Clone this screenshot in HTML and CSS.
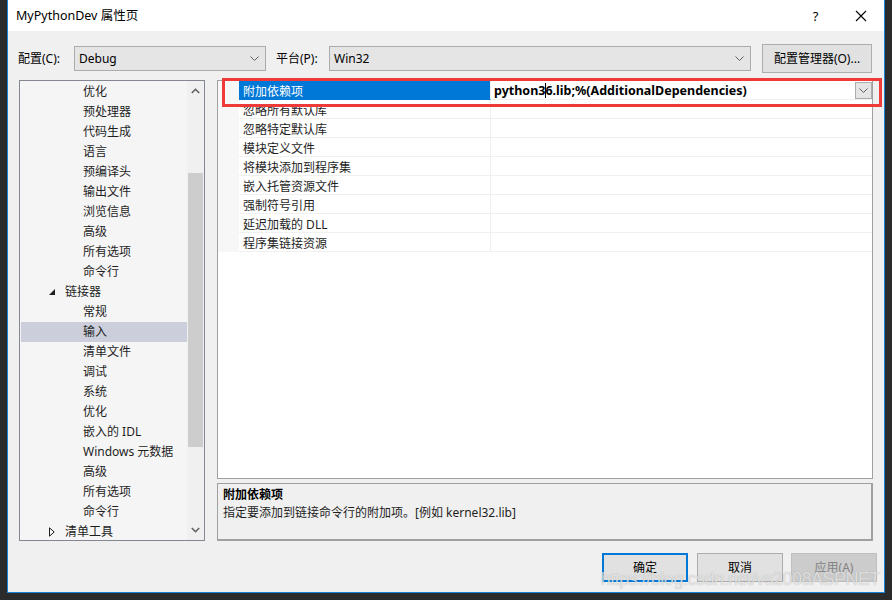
FILE: index.html
```html
<!DOCTYPE html>
<html lang="zh-CN">
<head>
<meta charset="utf-8">
<title>MyPythonDev 属性页</title>
<link rel="stylesheet" href="styles.css">
</head>
<body>
<div class="window">
  <div class="titlebar">
    <span class="title">MyPythonDev 属性页</span>
    <span class="tb-help">?</span>
    <span class="tb-close"><svg width="12" height="12" viewBox="0 0 12 12"><path d="M1 1L11 11M11 1L1 11" stroke="#000" stroke-width="1.1" fill="none"/></svg></span>
  </div>

  <div class="toolbar">
    <span class="tb-label lbl-config">配置(C):</span>
    <div class="combo combo-config"><span>Debug</span><svg class="chev" width="9" height="5" viewBox="0 0 9 5"><path d="M0.5 0.5L4.5 4.5L8.5 0.5" stroke="#606060" fill="none"/></svg></div>
    <span class="tb-label lbl-platform">平台(P):</span>
    <div class="combo combo-platform"><span>Win32</span><svg class="chev" width="9" height="5" viewBox="0 0 9 5"><path d="M0.5 0.5L4.5 4.5L8.5 0.5" stroke="#606060" fill="none"/></svg></div>
    <div class="btn btn-mgr">配置管理器(O)...</div>
  </div>

  <div class="main">
    <div class="tree">
      <ul class="tree-list">
        <li class="child">优化</li>
        <li class="child">预处理器</li>
        <li class="child">代码生成</li>
        <li class="child">语言</li>
        <li class="child">预编译头</li>
        <li class="child">输出文件</li>
        <li class="child">浏览信息</li>
        <li class="child">高级</li>
        <li class="child">所有选项</li>
        <li class="child">命令行</li>
        <li class="parent"><svg class="tw" width="6" height="6" viewBox="0 0 6 6"><path d="M6 0L6 6L0 6Z" fill="#1e1e1e"/></svg>链接器</li>
        <li class="child">常规</li>
        <li class="child selected">输入</li>
        <li class="child">清单文件</li>
        <li class="child">调试</li>
        <li class="child">系统</li>
        <li class="child">优化</li>
        <li class="child">嵌入的 IDL</li>
        <li class="child">Windows 元数据</li>
        <li class="child">高级</li>
        <li class="child">所有选项</li>
        <li class="child">命令行</li>
        <li class="parent"><svg class="tw" width="6" height="10" viewBox="0 0 6 10"><path d="M0.5 0.8L5.2 5L0.5 9.2Z" fill="none" stroke="#1e1e1e"/></svg>清单工具</li>
      </ul>
      <div class="scrollbar">
        <div class="sb-btn"><svg width="9" height="6" viewBox="0 0 9 6"><path d="M0.8 5L4.5 1.3L8.2 5" stroke="#606060" stroke-width="1.6" fill="none"/></svg></div>
        <div class="sb-track"><div class="sb-thumb"></div></div>
        <div class="sb-btn"><svg width="9" height="6" viewBox="0 0 9 6"><path d="M0.8 1L4.5 4.7L8.2 1" stroke="#606060" stroke-width="1.6" fill="none"/></svg></div>
      </div>
    </div>

    <div class="right">
      <div class="grid">
        <div class="row">
          <div class="margin"></div>
          <div class="name sel">附加依赖项</div>
          <div class="value edit"><span class="val-text">python3<span class="caret"></span>6.lib;%(AdditionalDependencies)</span><div class="dd"><svg width="9" height="5" viewBox="0 0 9 5"><path d="M0.5 0.5L4.5 4.5L8.5 0.5" stroke="#606060" fill="none"/></svg></div></div>
        </div>
        <div class="row"><div class="margin"></div><div class="name">忽略所有默认库</div><div class="value"></div></div>
        <div class="row"><div class="margin"></div><div class="name">忽略特定默认库</div><div class="value"></div></div>
        <div class="row"><div class="margin"></div><div class="name">模块定义文件</div><div class="value"></div></div>
        <div class="row"><div class="margin"></div><div class="name">将模块添加到程序集</div><div class="value"></div></div>
        <div class="row"><div class="margin"></div><div class="name">嵌入托管资源文件</div><div class="value"></div></div>
        <div class="row"><div class="margin"></div><div class="name">强制符号引用</div><div class="value"></div></div>
        <div class="row"><div class="margin"></div><div class="name">延迟加载的 DLL</div><div class="value"></div></div>
        <div class="row"><div class="margin"></div><div class="name">程序集链接资源</div><div class="value"></div></div>
      </div>
      <div class="highlight"></div>
      <div class="desc">
        <div class="desc-title">附加依赖项</div>
        <div class="desc-text">指定要添加到链接命令行的附加项。[例如 kernel32.lib]</div>
      </div>
    </div>
  </div>

  <div class="buttons">
    <div class="btn btn-ok">确定</div>
    <div class="btn btn-cancel">取消</div>
    <div class="btn btn-apply">应用(A)</div>
  </div>

  <div class="watermark">https://blog.csdn.net/vs2008ASPNET</div>
</div>
</body>
</html>
```

FILE: styles.css
```css
* { box-sizing: border-box; }
html, body { margin: 0; padding: 0; }
body {
  width: 892px;
  height: 600px;
  background: #2b2b2b;
  padding-left: 7px;
  font-family: "Noto Sans", "Noto Sans CJK SC", sans-serif;
  font-size: 12px;
  color: #000;
  overflow: hidden;
}
.window {
  position: relative;
  width: 878px;
  height: 593px;
  background: #f0f0f0;
  border: 1px solid #1883d7;
  border-top: none;
  display: flex;
  flex-direction: column;
}
.titlebar {
  height: 31px;
  background: #fff;
  display: flex;
  align-items: center;
  padding-left: 8px;
  flex: none;
}
.title { flex: 1; font-size: 12.5px; line-height: 16px; }
.tb-help { width: 45px; text-align: center; font-size: 13px; margin-left: 1px; }
.tb-close { width: 46px; display: flex; justify-content: center; }

.toolbar {
  margin-top: 13px;
  height: 29px;
  display: flex;
  align-items: center;
  padding-left: 10px;
  flex: none;
}
.tb-label { line-height: 16px; }
.lbl-config { width: 56px; }
.lbl-platform { width: 53px; margin-left: 10px; }
.combo {
  height: 25px;
  background: #e5e5e5;
  border: 1px solid #acacac;
  display: flex;
  align-items: center;
  justify-content: space-between;
  padding: 0 6px 0 4px;
  line-height: 16px;
}
.combo-config { width: 192px; }
.combo-platform { width: 422px; }
.btn {
  height: 29px;
  display: flex;
  align-items: center;
  justify-content: center;
  background: #e1e1e1;
  border: 1px solid #adadad;
  line-height: 16px;
}
.btn-mgr { width: 110px; margin-left: 11px; }

.main {
  margin-top: 7px;
  height: 461px;
  display: flex;
  padding-left: 11px;
  flex: none;
}
.tree {
  width: 186px;
  height: 461px;
  border: 1px solid #828790;
  background: #f5f5f5;
  display: flex;
  overflow: hidden;
}
.tree-list {
  list-style: none;
  margin: 0;
  padding: 1px 0 0;
  width: 167px;
  flex: none;
}
.tree-list li {
  height: 20px;
  line-height: 20px;
  white-space: nowrap;
  color: #1e1e1e;
  display: flex;
  align-items: center;
}
.tree-list li.child { padding-left: 63px; }
.tree-list li.parent { padding-left: 29px; }
.tree-list li.parent .tw { margin-right: 10px; flex: none; }
.tree-list li.selected { background: #cccedb; margin-left: 1px; padding-left: 62px; }
.scrollbar {
  width: 17px;
  flex: none;
  background: #f0f0f0;
  display: flex;
  flex-direction: column;
}
.sb-btn { height: 20px; display: flex; align-items: center; justify-content: center; flex: none; }
.sb-track { flex: 1; padding-top: 72px; padding-left: 1px; }
.sb-thumb { width: 15px; height: 274px; background: #cdcdcd; }

.right {
  position: relative;
  margin-left: 12px;
  width: 656px;
  display: flex;
  flex-direction: column;
}
.grid {
  height: 399px;
  background: #fff;
  border: 1px solid #a0a0a0;
  flex: none;
}
.row {
  height: 19px;
  display: flex;
}
.row .margin { width: 21px; background: #f7f7f7; flex: none; }
.row .name {
  width: 252px;
  flex: none;
  padding-left: 4px;
  padding-top: 2px;
  line-height: 17px;
  border-bottom: 1px solid #f0f0f0;
  border-right: 1px solid #f0f0f0;
  color: #1e1e1e;
  white-space: nowrap;
}
.row .name.sel { background: #0078d7; color: #fff; border-bottom-color: #0078d7; }
.row .value {
  flex: 1;
  border-bottom: 1px solid #f0f0f0;
  display: flex;
  align-items: center;
  justify-content: space-between;
}
.row .value.edit { padding-left: 3px; padding-top: 1px; }
.val-text { font-weight: 700; font-size: 12.5px; line-height: 16px; white-space: nowrap; }
.caret { display: inline-block; width: 0; height: 15px; border-left: 1px solid #000; vertical-align: -3px; margin-right: -1px; }
.dd {
  width: 17px;
  height: 17px;
  background: #e5e5e5;
  border: 1px solid #acacac;
  display: flex;
  align-items: center;
  justify-content: center;
}
.highlight {
  position: absolute;
  left: 5px;
  top: -2px;
  width: 660px;
  height: 29px;
  border: 3px solid #ef3a3a;
}
.desc {
  margin-top: 4px;
  height: 58px;
  background: #f0f0f0;
  border: 1px solid #a0a0a0;
  border-bottom: 2px solid #a0a0a0;
  border-right: 2px solid #a0a0a0;
  padding: 2px 5px;
}
.desc-title { font-weight: 700; line-height: 18px; }
.desc-text { line-height: 18px; color: #1e1e1e; }

.buttons {
  margin-top: 12px;
  display: flex;
  justify-content: flex-end;
  padding-right: 7px;
  gap: 9px;
}
.btn-ok { width: 86px; border: 2px solid #0078d7; }
.btn-cancel { width: 86px; }
.btn-apply { width: 86px; background: #cccccc; border-color: #bfbfbf; color: #838383; margin-left: -1px; }

.watermark {
  position: absolute;
  right: 4px;
  bottom: 2px;
  font-family: "Liberation Sans", sans-serif;
  font-size: 18px;
  letter-spacing: -0.5px;
  color: rgba(255, 255, 255, 0.65);
  text-shadow: 0 0 1px rgba(120, 120, 120, 0.6);
  pointer-events: none;
  white-space: nowrap;
}
```
